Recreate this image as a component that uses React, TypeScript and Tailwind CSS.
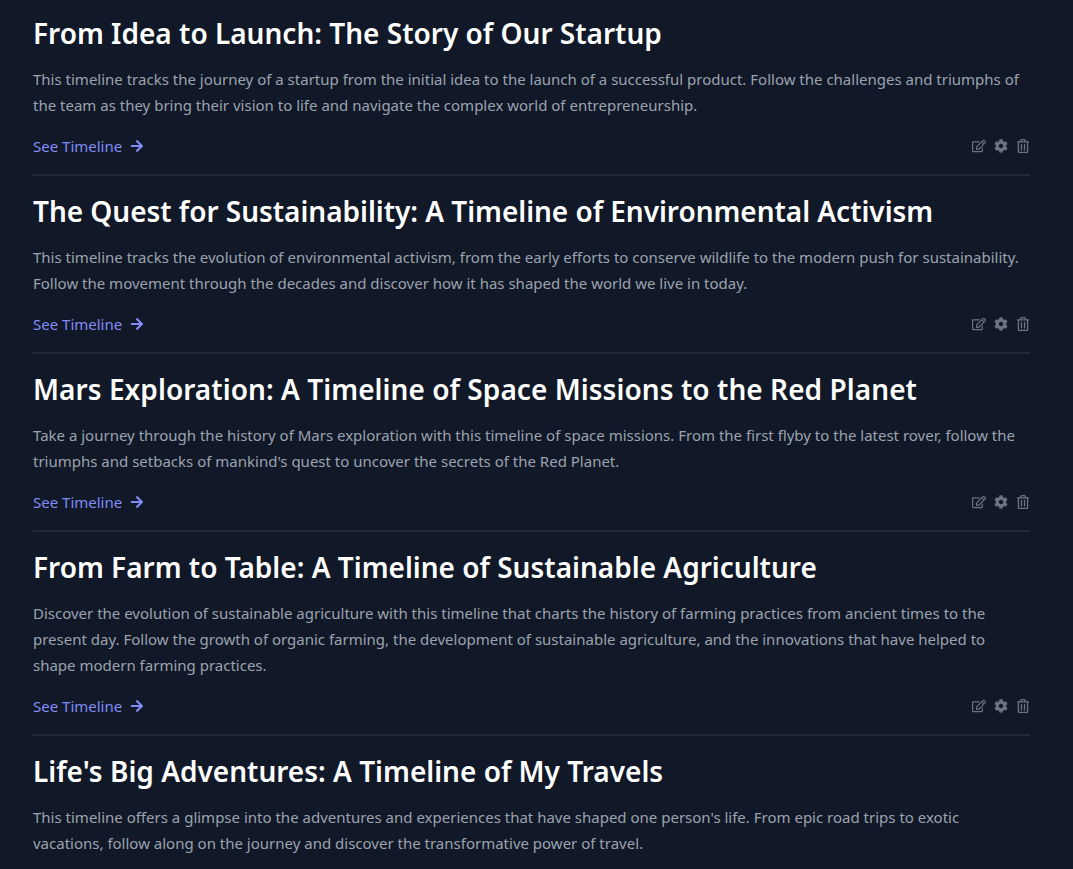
import React from 'react';
import { FaArrowRight, FaCog, FaRegEdit, FaRegTrashAlt } from 'react-icons/fa';

interface Timeline {
  id: number;
  title: string;
  titleClass?: string;
  description: string;
}

const timelines: Timeline[] = [
  {
    id: 1,
    title: 'From Idea to Launch: The Story of Our Startup',
    description:
      'This timeline tracks the journey of a startup from the initial idea to the launch of a successful product. Follow the challenges and triumphs of the team as they bring their vision to life and navigate the complex world of entrepreneurship.',
  },
  {
    id: 2,
    title: 'The Quest for Sustainability: A Timeline of Environmental Activism',
    titleClass: 'tracking-[-0.035px]',
    description:
      'This timeline tracks the evolution of environmental activism, from the early efforts to conserve wildlife to the modern push for sustainability. Follow the movement through the decades and discover how it has shaped the world we live in today.',
  },
  {
    id: 3,
    title: 'Mars Exploration: A Timeline of Space Missions to the Red Planet',
    titleClass: 'tracking-[0.055px]',
    description:
      "Take a journey through the history of Mars exploration with this timeline of space missions. From the first flyby to the latest rover, follow the triumphs and setbacks of mankind's quest to uncover the secrets of the Red Planet.",
  },
  {
    id: 4,
    title: 'From Farm to Table: A Timeline of Sustainable Agriculture',
    description:
      'Discover the evolution of sustainable agriculture with this timeline that charts the history of farming practices from ancient times to the present day. Follow the growth of organic farming, the development of sustainable agriculture, and the innovations that have helped to shape modern farming practices.',
  },
  {
    id: 5,
    title: "Life's Big Adventures: A Timeline of My Travels",
    description:
      "This timeline offers a glimpse into the adventures and experiences that have shaped one person's life. From epic road trips to exotic vacations, follow along on the journey and discover the transformative power of travel.",
  },
];

const TimelineItem = ({ timeline }: { timeline: Timeline }) => {
  return (
    <article className="border-b-2 border-[#1f2937] pt-4 pb-4 first:pt-3.5">
      <h2 className={`mb-3.5 text-[28px] leading-[38px] font-semibold text-white ${timeline.titleClass ?? ''}`}>
        {timeline.title}
      </h2>
      <p className="mb-4 text-[15px] leading-[26px] text-[#9ca3af]">{timeline.description}</p>
      <div className="flex h-6 items-center justify-between">
        <a href="#" className="flex items-center gap-2 text-[15px] leading-6 text-[#818cf8]">
          See Timeline
          <FaArrowRight className="size-3.5" />
        </a>
        <div className="flex items-center gap-2 text-[#6b7280]">
          <button type="button" aria-label="Edit">
            <FaRegEdit className="size-3.5" />
          </button>
          <button type="button" aria-label="Settings">
            <FaCog className="size-3.5" />
          </button>
          <button type="button" aria-label="Delete">
            <FaRegTrashAlt className="size-3.5" />
          </button>
        </div>
      </div>
    </article>
  );
};

const App = () => {
  return (
    <div className="h-screen overflow-hidden bg-[#111827] pr-[43px] pl-[33px] font-['Noto_Sans',sans-serif]">
      {timelines.map((timeline) => (
        <TimelineItem key={timeline.id} timeline={timeline} />
      ))}
    </div>
  );
};

export default App;
